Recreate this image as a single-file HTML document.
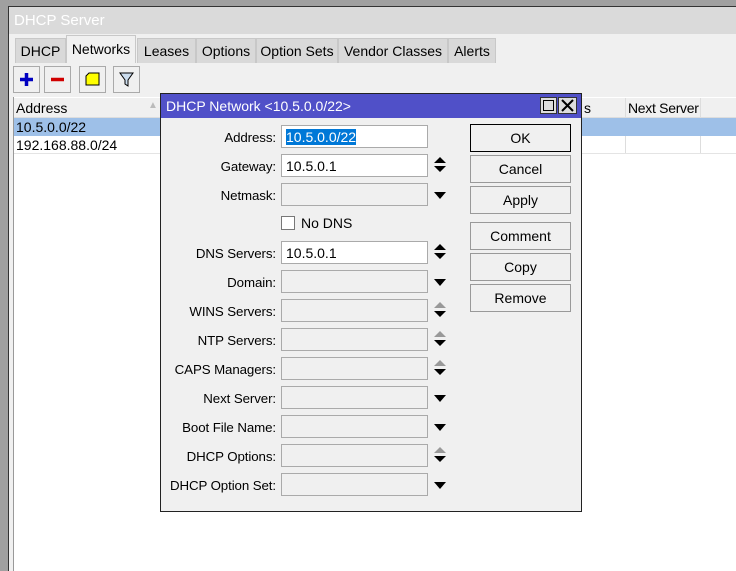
<!DOCTYPE html>
<html><head><style>
*{box-sizing:border-box;margin:0;padding:0}
html,body{width:736px;height:571px;overflow:hidden}
body{background:#a0a0a0;position:relative;font-family:"Liberation Sans",Arial,sans-serif;font-size:13px;color:#000}
.a{position:absolute}
.win{left:8px;top:6px;width:728px;height:565px;background:#f0f0f0;border:1px solid #333;border-right:none;border-bottom:none}
.tab{position:absolute;top:38px;height:25px;background:#d9d9d9;border:1px solid #c8c8c8;border-bottom:none;padding-top:4px;text-align:center;font-size:14px}
.tb{position:absolute;top:66px;width:27px;height:27px;border:1px solid #aaa;background:#f0f0f0}
.lbl{position:absolute;right:460px;text-align:right;font-size:13.3px;white-space:nowrap;letter-spacing:-0.1px;margin-top:2px}
.fld{position:absolute;left:281px;width:147px;height:23px;border:1px solid #aaa;background:#f0f0f0;font-size:14px;padding:3px 4px}
.btn{position:absolute;left:470px;width:101px;height:28px;border:1px solid #999;background:#f0f0f0;text-align:center;font-size:14px;padding-top:5px}
</style></head><body>
<div class="a win"></div>
<div class="a" style="left:9px;top:7px;width:727px;height:27px;background:#dadada;color:#fff;font-size:15px;padding:5px 0 0 5px">DHCP Server</div>
<div class="tab" style="left:15px;width:51px">DHCP</div>
<div class="tab" style="left:66px;width:70px;top:35px;height:28px;background:#f0f0f0;padding-top:5px">Networks</div>
<div class="tab" style="left:137px;width:59px">Leases</div>
<div class="tab" style="left:196px;width:60px">Options</div>
<div class="tab" style="left:256px;width:82px">Option Sets</div>
<div class="tab" style="left:338px;width:110px">Vendor Classes</div>
<div class="tab" style="left:448px;width:48px">Alerts</div>
<div class="tb" style="left:13px"><svg width="25" height="25"><path d="M12.5 6v13M6 12.5h13" stroke="#0000c0" stroke-width="3.5"/></svg></div>
<div class="tb" style="left:44px"><svg width="25" height="25"><path d="M6 12.5h13" stroke="#d00000" stroke-width="3.5"/></svg></div>
<div class="tb" style="left:79px"><svg width="25" height="25"><path d="M6 9l3-3h10v12H6z" fill="#ffff00" stroke="#000"/></svg></div>
<div class="tb" style="left:113px"><svg width="25" height="25"><path d="M6 6h13l-5 7v6l-3-2v-4z" fill="#cde" stroke="#000"/></svg></div>
<div class="a" style="left:13px;top:97px;width:723px;height:474px;background:#fff;border-left:1px solid #999"></div>
<div class="a" style="left:14px;top:98px;width:722px;height:20px;background:#f0f0f0;border-bottom:1px solid #ddd"></div>
<div class="a" style="left:16px;top:100px;font-size:14px">Address</div>
<div class="a" style="left:148px;top:100px;color:#bbb;font-size:10px">▲</div>
<div class="a" style="left:584px;top:100px;font-size:14px">s</div>
<div class="a" style="left:625px;top:98px;width:1px;height:56px;background:#ddd"></div>
<div class="a" style="left:700px;top:98px;width:1px;height:56px;background:#ddd"></div>
<div class="a" style="left:628px;top:100px;font-size:14px;letter-spacing:-0.3px">Next Server</div>
<div class="a" style="left:14px;top:118px;width:722px;height:18px;background:#9ec0e8"></div>
<div class="a" style="left:14px;top:136px;width:722px;height:18px;border-bottom:1px solid #e4e4e4"></div>
<div class="a" style="left:16px;top:119px;font-size:14px">10.5.0.0/22</div>
<div class="a" style="left:16px;top:137px;font-size:14px">192.168.88.0/24</div>
<!-- dialog -->
<div class="a" style="left:160px;top:93px;width:422px;height:419px;background:#f0f0f0;border:1px solid #222"></div>
<div class="a" style="left:161px;top:94px;width:420px;height:24px;background:#5050c8;color:#fff;font-size:14px;padding:4px 0 0 5px">DHCP Network &lt;10.5.0.0/22&gt;</div>
<div class="a" style="left:540px;top:97px;width:17px;height:17px;background:#ddd;border:1px solid #333"><div style="margin:2px;width:11px;height:11px;border:1px solid #000"></div></div>
<div class="a" style="left:558px;top:97px;width:19px;height:17px;background:#ddd;border:1px solid #333"><svg width="17" height="15"><path d="M3 2l11 11M14 2L3 13" stroke="#000" stroke-width="2"/></svg></div>

<div class="lbl" style="top:128px">Address:</div>
<div class="fld" style="top:125px;background:#fff"><span style="background:#0078d7;color:#fff">10.5.0.0/22</span></div>
<div class="lbl" style="top:157px">Gateway:</div>
<div class="fld" style="top:154px;background:#fff">10.5.0.1</div>
<div class="lbl" style="top:186px">Netmask:</div>
<div class="fld" style="top:183px"></div>
<div class="a" style="left:281px;top:216px;width:14px;height:14px;border:1px solid #777;background:#fff"></div>
<div class="a" style="left:301px;top:215px;font-size:14px">No DNS</div>
<div class="lbl" style="top:244px">DNS Servers:</div>
<div class="fld" style="top:241px;background:#fff">10.5.0.1</div>
<div class="lbl" style="top:273px">Domain:</div><div class="fld" style="top:270px"></div>
<div class="lbl" style="top:302px">WINS Servers:</div><div class="fld" style="top:299px"></div>
<div class="lbl" style="top:331px">NTP Servers:</div><div class="fld" style="top:328px"></div>
<div class="lbl" style="top:360px">CAPS Managers:</div><div class="fld" style="top:357px"></div>
<div class="lbl" style="top:389px">Next Server:</div><div class="fld" style="top:386px"></div>
<div class="lbl" style="top:418px">Boot File Name:</div><div class="fld" style="top:415px"></div>
<div class="lbl" style="top:447px">DHCP Options:</div><div class="fld" style="top:444px"></div>
<div class="lbl" style="top:476px">DHCP Option Set:</div><div class="fld" style="top:473px"></div>

<svg class="a" style="left:433px;top:150px" width="16" height="340">
<g fill="#000">
<path d="M1 13l6-6 6 6z M1 16l6 6 6-6z"/>
<path d="M1 42l6 7 6-7z"/>
<path d="M1 100l6-6 6 6z M1 103l6 6 6-6z"/>
<path d="M1 129l6 7 6-7z"/>
<path d="M1 161l6 6 6-6z M1 190l6 6 6-6z M1 219l6 6 6-6z"/>
<path d="M1 245l6 7 6-7z M1 274l6 7 6-7z"/>
<path d="M1 306l6 6 6-6z"/>
<path d="M1 332l6 7 6-7z"/>
</g>
<g fill="#999">
<path d="M1 158l6-6 6 6z M1 187l6-6 6 6z M1 216l6-6 6 6z M1 303l6-6 6 6z"/>
</g>
</svg>

<div class="btn" style="top:124px;border:1px solid #000">OK</div>
<div class="btn" style="top:155px">Cancel</div>
<div class="btn" style="top:186px">Apply</div>
<div class="btn" style="top:222px">Comment</div>
<div class="btn" style="top:253px">Copy</div>
<div class="btn" style="top:284px">Remove</div>
</body></html>
